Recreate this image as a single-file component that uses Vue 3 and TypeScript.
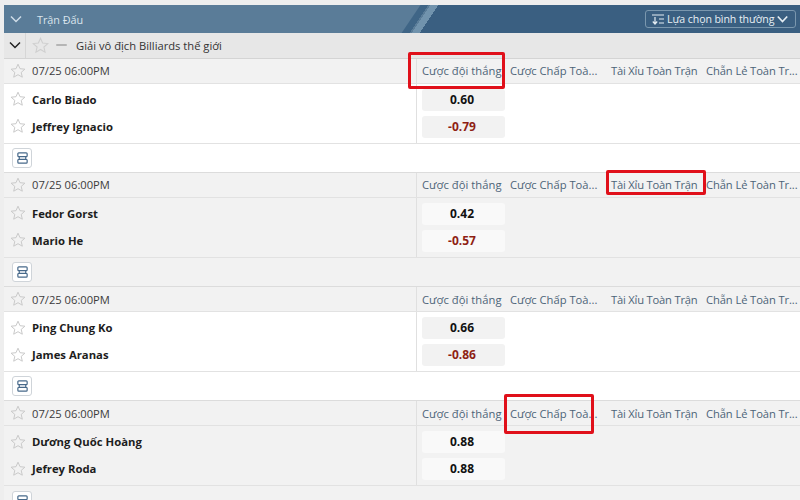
<script setup lang="ts">
interface Match {
  time: string
  home: string
  away: string
  homeOdd: string
  awayOdd: string
  alt: boolean
}
const matches: Match[] = [
  { time: '07/25 06:00PM', home: 'Carlo Biado', away: 'Jeffrey Ignacio', homeOdd: '0.60', awayOdd: '-0.79', alt: false },
  { time: '07/25 06:00PM', home: 'Fedor Gorst', away: 'Mario He', homeOdd: '0.42', awayOdd: '-0.57', alt: true },
  { time: '07/25 06:00PM', home: 'Ping Chung Ko', away: 'James Aranas', homeOdd: '0.66', awayOdd: '-0.86', alt: false },
  { time: '07/25 06:00PM', home: 'Dương Quốc Hoàng', away: 'Jefrey Roda', homeOdd: '0.88', awayOdd: '0.88', alt: true },
]
const markets = ['Cược đội thắng', 'Cược Chấp Toà...', 'Tài Xỉu Toàn Trận', 'Chẵn Lẻ Toàn Tr...']
const starPath = 'M8 1.2l2 4.5 4.9.5-3.7 3.2 1.1 4.8L8 11.7l-4.3 2.5 1.1-4.8L1.1 6.2 6 5.700z'
</script>

<template>
  <div class="page">
    <header class="top">
      <div class="top-accent"></div>
      <span class="top-chev">
        <svg width="14" height="14" viewBox="0 0 14 14"><path d="M2 4.500l5 5 5-5" fill="none" stroke="#cfdde8" stroke-width="1.500" /></svg>
      </span>
      <span class="top-title">Trận Đấu</span>
      <button class="select">
        <svg class="sel-icon" width="12" height="11" viewBox="0 0 12 11"><path d="M0 1h12M7 5h5M7 9h5M3 3v7M.8 7.500L3 10l2.200-2.500" fill="none" stroke="#e4edf3" stroke-width="1.200" /></svg>
        <span class="sel-text">Lựa chọn bình thường</span>
        <svg class="sel-icon" width="11" height="9" viewBox="0 0 11 9"><path d="M.8 1.500l4.700 5 4.700-5" fill="none" stroke="#e4edf3" stroke-width="1.700" /></svg>
      </button>
    </header>

    <div class="league">
      <span class="league-chev">
        <svg width="12" height="10" viewBox="0 0 12 10"><path d="M1 2.500l5 5 5-5" fill="none" stroke="#222" stroke-width="1.500" /></svg>
      </span>
      <svg class="star big" width="17" height="17" viewBox="0 0 16 16"><path :d="starPath" fill="none" stroke="#cfcfcf" /></svg>
      <span class="flag"></span>
      <span class="league-name">Giải vô địch Billiards thế giới</span>
    </div>

    <section v-for="(m, i) in matches" :key="i" class="match" :class="{ alt: m.alt }">
      <div class="head">
        <div class="head-left">
          <svg class="star" width="16" height="16" viewBox="0 0 16 16"><path :d="starPath" fill="none" stroke="#cacaca" /></svg>
          <span>{{ m.time }}</span>
        </div>
        <div class="markets">
          <span v-for="mk in markets" :key="mk" class="market">{{ mk }}</span>
        </div>
      </div>
      <div class="body">
        <div class="teams">
          <div class="team">
            <svg class="star" width="16" height="16" viewBox="0 0 16 16"><path :d="starPath" fill="none" stroke="#cacaca" /></svg>
            <span>{{ m.home }}</span>
          </div>
          <div class="team">
            <svg class="star" width="16" height="16" viewBox="0 0 16 16"><path :d="starPath" fill="none" stroke="#cacaca" /></svg>
            <span>{{ m.away }}</span>
          </div>
        </div>
        <div class="odds">
          <div class="odd" :class="{ neg: m.homeOdd.startsWith('-') }">{{ m.homeOdd }}</div>
          <div class="odd" :class="{ neg: m.awayOdd.startsWith('-') }">{{ m.awayOdd }}</div>
        </div>
      </div>
      <div class="foot">
        <span class="stack-btn">
          <svg width="13" height="14" viewBox="0 0 14 14"><path d="M3 1.500h8a1 1 0 0 1 1 1v2a1 1 0 0 1-1 1H3a1 1 0 0 1-1-1v-2a1 1 0 0 1 1-1zM3.500 5.500v3M10.500 5.500v3M3 8.500h8a1 1 0 0 1 1 1v2a1 1 0 0 1-1 1H3a1 1 0 0 1-1-1v-2a1 1 0 0 1 1-1z" fill="none" stroke="#47698a" stroke-width="1.300" /></svg>
        </span>
      </div>
    </section>

    <div class="mark mark-a"></div>
    <div class="mark mark-b"></div>
    <div class="mark mark-c"></div>
  </div>
</template>

<style>
html, body { margin: 0; background: #eeeeee; overflow: hidden; }
</style>

<style scoped>
.page {
  position: relative;
  width: 800px;
  height: 500px;
  overflow: hidden;
  box-sizing: border-box;
  padding: 5px 0 0 4px;
  background: #eeeeee;
  font-family: "Open Sans", "Noto Sans", sans-serif;
  font-size: 11.200px;
  color: #333;
}
.top {
  display: flex;
  align-items: center;
  height: 28px;
  background: #5a7c98;
  position: relative;
  overflow: hidden;
}
.top-chev { display: flex; justify-content: center; width: 24px; position: relative; }
.top-title { margin-left: 9px; color: #dbe5ed; font-size: 10.800px; position: relative; }
.top-accent {
  position: absolute;
  left: 407px;
  top: 0;
  right: -30px;
  height: 28px;
  background: linear-gradient(90deg, #3f6586 0 8px, #5a7c98 8px 10px, #7193ad 10px 18px, #3a5f81 18px 100%);
  transform: skewX(-34deg);
}
.select {
  display: flex;
  align-items: center;
  gap: 3px;
  margin-left: auto;
  margin-right: 4px;
  height: 18px;
  width: 151px;
  box-sizing: border-box;
  padding: 0 7px 0 6px;
  background: #3a5f81;
  border: 1px solid #7a97ae;
  border-radius: 3px;
  color: #e8eff4;
  font: inherit;
  font-size: 10.600px;
  letter-spacing: -0.1px;
  white-space: nowrap;
  position: relative;
  z-index: 1;
}
.sel-icon { flex: none; }
.sel-text { flex: 1; text-align: left; color: #e8eff4; }
.league {
  display: flex;
  align-items: center;
  height: 25.500px;
  background: #e7e7e7;
  border-bottom: 1px solid #d4d4d4;
  box-sizing: border-box;
}
.league-chev {
  display: flex;
  justify-content: center;
  align-items: center;
  width: 22px;
  height: 100%;
  border-right: 1px solid #d6d6d6;
  box-sizing: border-box;
}
.star { flex: none; margin-left: 6px; }
.flag {
  width: 11px;
  height: 2px;
  margin: 0 9px 0 7px;
  background: #b5b5b5;
  border-radius: 1px;
}
.league-name { color: #333; }
.match { background: #fff; }
.match.alt { background: #f2f2f2; }
.head {
  display: flex;
  height: 25px;
  background: #f2f2f2;
  border-bottom: 1px solid #e2e2e2;
  box-sizing: border-box;
}
.head-left {
  display: flex;
  align-items: center;
  gap: 6px;
  width: 413px;
  flex: none;
  border-right: 1px solid #e0e0e0;
  box-sizing: border-box;
  color: #3c3c3c;
}
.markets {
  display: flex;
  align-items: center;
  flex: none;
  width: 383px;
  padding-left: 5px;
  box-sizing: border-box;
}
.market {
  flex: none;
  white-space: nowrap;
  color: #4d6478;
  font-size: 11.200px;
}
.market:nth-child(1) { width: 88px; letter-spacing: 0.05px; }
.market:nth-child(2) { width: 101px; }
.market:nth-child(3) { width: 95px; letter-spacing: -0.2px; }
.market:nth-child(4) { letter-spacing: -0.1px; }
.body {
  display: flex;
  height: 60px;
  border-bottom: 1px solid #e2e2e2;
  box-sizing: border-box;
}
.teams {
  width: 413px;
  flex: none;
  border-right: 1px solid #e0e0e0;
  box-sizing: border-box;
  padding-top: 2px;
}
.team {
  display: flex;
  align-items: center;
  gap: 6px;
  height: 27px;
  font-size: 11.300px;
  font-weight: 700;
  color: #1d1d1d;
}
.odds {
  display: flex;
  flex-direction: column;
  gap: 5px;
  padding: 5px 0 0 5px;
}
.odd {
  width: 83px;
  height: 22px;
  line-height: 22px;
  text-align: center;
  box-sizing: border-box;
  padding-right: 3px;
  border-radius: 3px;
  background: #f2f2f2;
  font-weight: 700;
  font-size: 12px;
  color: #111;
}
.match.alt .odd { background: #f9f9f9; }
.odd.neg { color: #8f1f14; }
.foot {
  display: flex;
  align-items: center;
  height: 29.340px;
  border-bottom: 1px solid #dcdcdc;
  box-sizing: border-box;
  padding-left: 8px;
}
.stack-btn {
  display: flex;
  align-items: center;
  justify-content: center;
  width: 20px;
  height: 20px;
  box-sizing: border-box;
  background: #fff;
  border: 1px solid #cfd4d9;
  border-radius: 3px;
}
.mark {
  position: absolute;
  border: 3px solid #e0101a;
  border-radius: 2px;
  box-sizing: border-box;
}
.mark-a { left: 408px; top: 52px; width: 97px; height: 37px; }
.mark-b { left: 606px; top: 170px; width: 100px; height: 25px; }
.mark-c { left: 504px; top: 394px; width: 90px; height: 40px; }
</style>
